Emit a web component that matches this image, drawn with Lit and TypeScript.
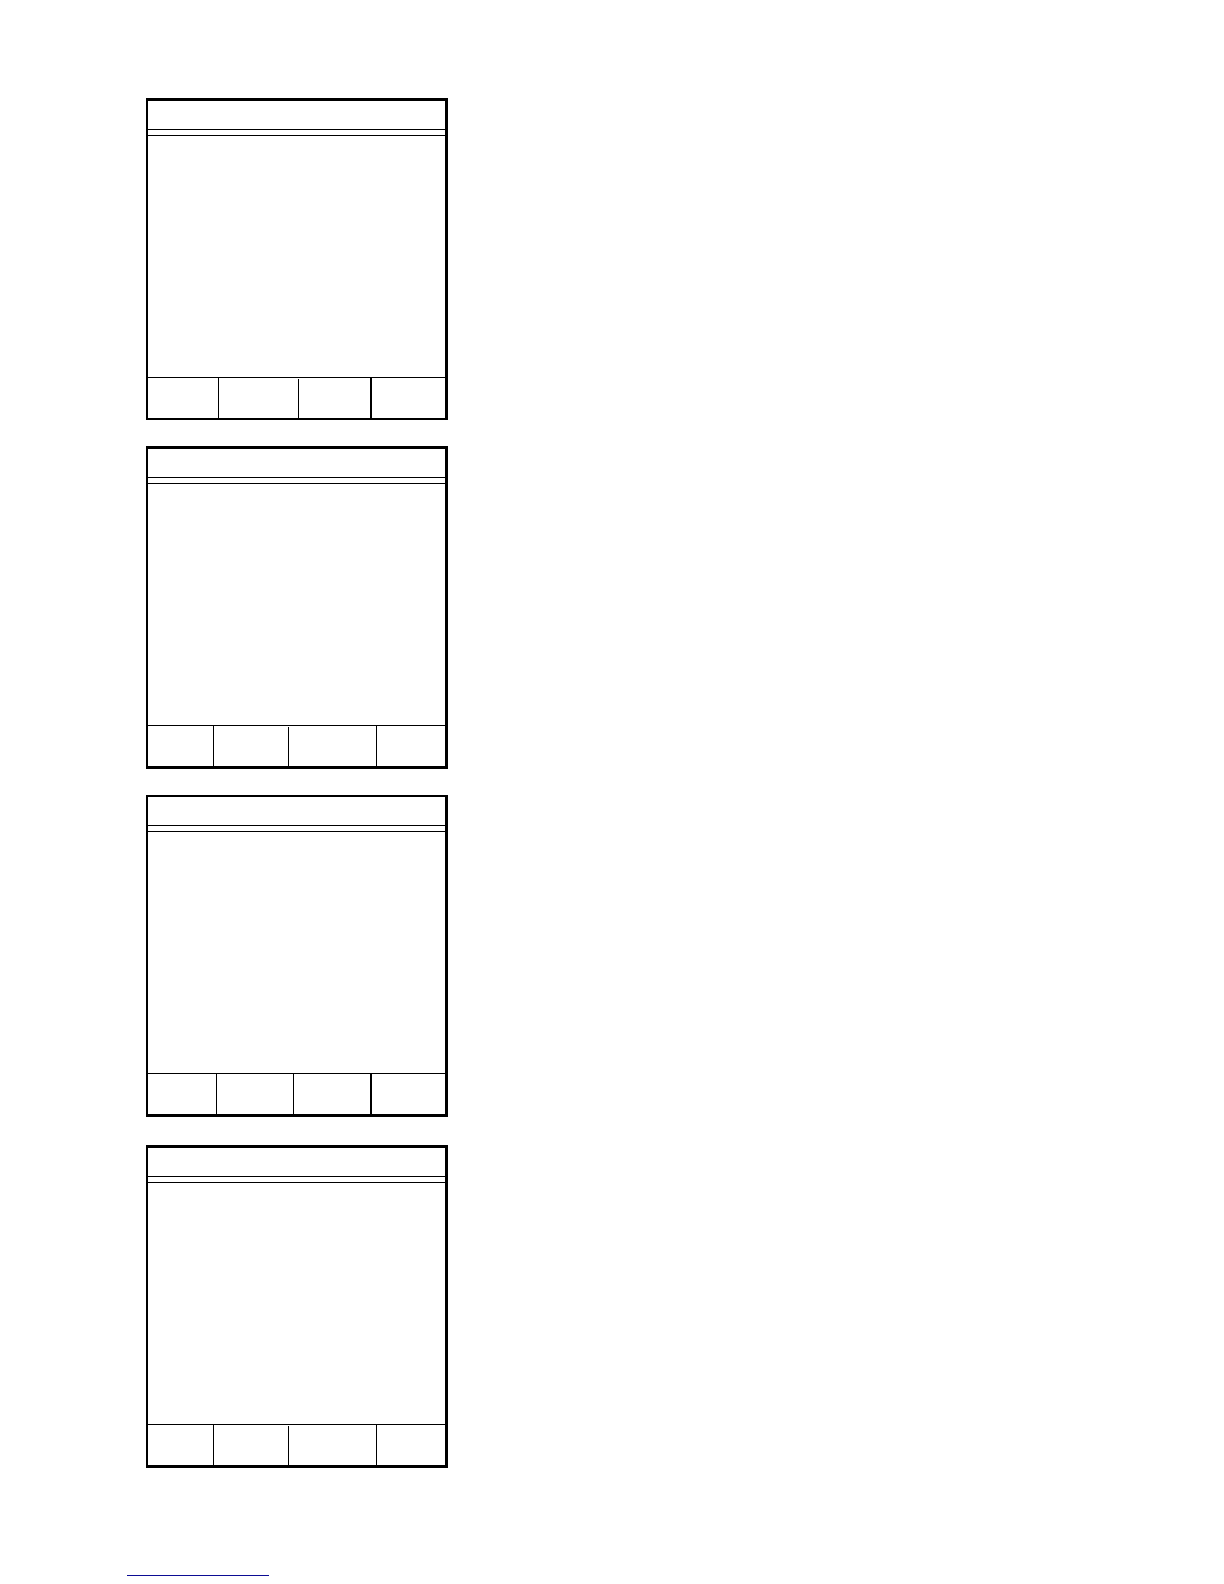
import { LitElement, html, css } from "lit";
import { customElement, property } from "lit/decorators.js";
import { classMap } from "lit/directives/class-map.js";
import { styleMap } from "lit/directives/style-map.js";

interface Cell {
  size: number;
  heavy?: boolean;
  inset?: boolean;
}

interface Panel {
  cells: Cell[];
  thinTop?: boolean;
  thinBottom?: boolean;
}

const narrowEdges: Cell[] = [
  { size: 65 },
  { size: 75 },
  { size: 88, inset: true },
  { size: 69 },
];

const panels: Panel[] = [
  {
    thinBottom: true,
    cells: [
      { size: 70 },
      { size: 80 },
      { size: 72, inset: true },
      { size: 75, heavy: true },
    ],
  },
  { cells: narrowEdges },
  {
    thinTop: true,
    cells: [
      { size: 68 },
      { size: 77 },
      { size: 77 },
      { size: 75, heavy: true },
    ],
  },
  { cells: narrowEdges },
];

/** A framed display: title bar, double rule, open body, row of soft keys. */
@customElement("display-panel")
export class DisplayPanel extends LitElement {
  static styles = css`
    :host {
      display: block;
    }
    .panel {
      display: flex;
      flex-direction: column;
      border: 3px solid #000;
      border-left-width: 2px;
    }
    .thin-top {
      border-top-width: 2px;
    }
    .thin-bottom {
      border-bottom-width: 2px;
    }
    .title {
      min-height: 28px;
      border-bottom: 1px solid #000;
    }
    .rule {
      min-height: 5px;
      border-bottom: 1px solid #000;
    }
    .body {
      min-height: 241px;
    }
    .keys {
      display: grid;
      min-height: 40px;
      border-top: 1px solid #000;
    }
    .key + .key {
      border-left: 1px solid #000;
    }
    .key + .heavy {
      border-left-width: 2px;
    }
    .inset {
      margin-top: 1px;
    }
  `;

  @property({ attribute: false }) panel: Panel = { cells: [] };

  render() {
    const { cells, thinTop, thinBottom } = this.panel;
    const columns = cells.map((c) => `${c.size}fr`).join(" ");
    return html`
      <section
        class=${classMap({
          panel: true,
          "thin-top": !!thinTop,
          "thin-bottom": !!thinBottom,
        })}
      >
        <header class="title"></header>
        <div class="rule"></div>
        <div class="body"></div>
        <footer class="keys" style=${styleMap({ gridTemplateColumns: columns })}>
          ${cells.map(
            (c) => html`<div
              class=${classMap({ key: true, heavy: !!c.heavy, inset: !!c.inset })}
            ></div>`
          )}
        </footer>
      </section>
    `;
  }
}

@customElement("app-root")
export class AppRoot extends LitElement {
  static styles = css`
    :host {
      display: block;
      min-height: 100vh;
      background: #fff;
      font-family: "Liberation Sans", sans-serif;
    }
    .page {
      display: flex;
      flex-direction: column;
      padding: 98px 127px 8px;
    }
    .panels {
      display: flex;
      flex-direction: column;
      gap: 26px;
      max-width: 302px;
      padding-left: 19px;
    }
    .last {
      padding-top: 2px;
    }
    .link {
      display: block;
      width: 100%;
      max-width: 142px;
      margin-top: 107px;
      border-bottom: 1px solid #0c0c94;
    }
  `;

  render() {
    return html`
      <div class="page">
        <main class="panels">
          ${panels.map(
            (p, i) => html`<display-panel
              class=${classMap({ last: i === panels.length - 1 })}
              .panel=${p}
            ></display-panel>`
          )}
        </main>
        <a class="link" href="#"></a>
      </div>
    `;
  }
}
